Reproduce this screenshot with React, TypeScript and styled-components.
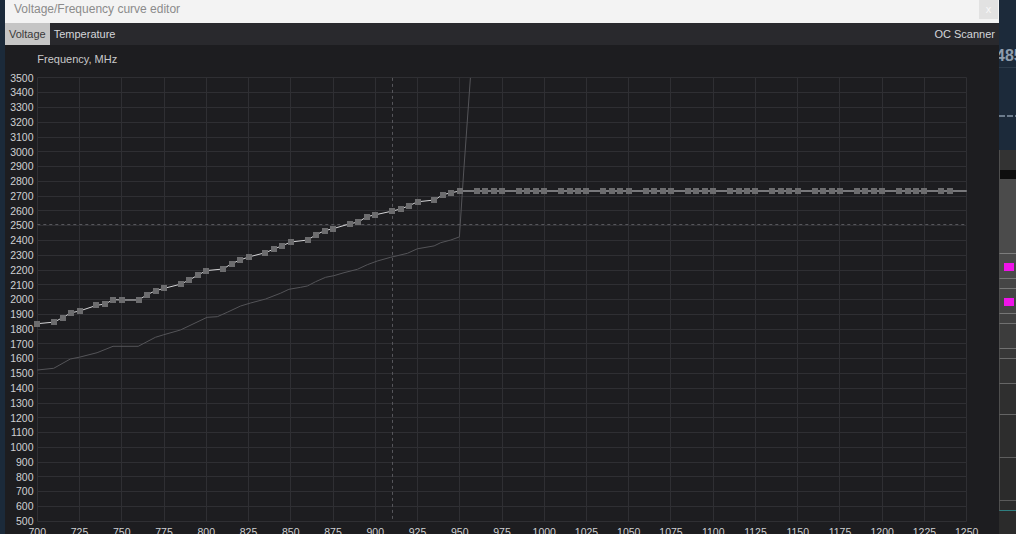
import React from 'react';
import styled, { createGlobalStyle } from 'styled-components';

type CurvePoint = [number, number];

const VOLTAGE_MIN = 700;
const VOLTAGE_MAX = 1250;
const FREQ_MIN = 500;
const FREQ_MAX = 3500;

const CHART_WIDTH = 994;
const CHART_HEIGHT = 489;

const plot = {
    left: 32.3,
    right: 961.7,
    top: 32.9,
    bottom: 476.3,
};

const editedCurve: CurvePoint[] = [
    [700, 1837], [710, 1848], [715, 1878], [720, 1911], [725, 1923],
    [735, 1961], [740, 1970], [745, 1999], [750, 1997],
    [760, 1997], [765, 2033], [770, 2060], [775, 2076],
    [785, 2105], [790, 2133], [795, 2165], [800, 2196],
    [810, 2207], [815, 2243], [820, 2268], [825, 2288],
    [835, 2317], [840, 2342], [845, 2365], [850, 2390],
    [860, 2403], [865, 2439], [870, 2466], [875, 2480],
    [885, 2513], [890, 2525], [895, 2561], [900, 2574],
    [910, 2599], [915, 2613], [920, 2635], [925, 2662],
    [935, 2674], [940, 2710], [945, 2723], [950, 2735],
];

const FLAT_FREQ = 2735;
for (let mv = 955; mv <= 1240; mv += 5) {
    if ((mv - 705) % 25 !== 0) {
        editedCurve.push([mv, FLAT_FREQ]);
    }
}

const defaultCurve: CurvePoint[] = [
    [700, 1524], [709.7, 1535], [719.5, 1598], [724.9, 1610], [735.4, 1641],
    [744.8, 1684], [759.7, 1684], [769.9, 1745], [774.5, 1761], [784.7, 1794],
    [800.5, 1880], [806.5, 1884], [812.4, 1914], [820.3, 1957], [826.2, 1977],
    [835.1, 2004], [844, 2043], [848.9, 2070], [855.8, 2083], [859.8, 2092],
    [864.7, 2121], [870.6, 2151], [875.5, 2162], [881.5, 2182], [889.4, 2205],
    [895.3, 2236], [901.2, 2261], [909.1, 2286], [919, 2313], [924.9, 2344],
    [934.8, 2363], [938.7, 2385], [944.7, 2403], [949.8, 2424], [952.4, 2877],
    [956.3, 3500],
];

const cursor = { mv: 910, freq: 2510 };

const xOf = (mv: number) => plot.left + ((mv - VOLTAGE_MIN) / (VOLTAGE_MAX - VOLTAGE_MIN)) * (plot.right - plot.left);
const yOf = (freq: number) => plot.bottom - ((freq - FREQ_MIN) / (FREQ_MAX - FREQ_MIN)) * (plot.bottom - plot.top);
const crisp = (v: number) => Math.floor(v) + 0.5;
const toPolyline = (points: CurvePoint[]) => points.map(([mv, f]) => `${xOf(mv).toFixed(1)},${yOf(f).toFixed(1)}`).join(' ');

const voltageTicks: number[] = [];
for (let mv = VOLTAGE_MIN; mv <= VOLTAGE_MAX; mv += 25) {
    voltageTicks.push(mv);
}

const freqTicks: number[] = [];
for (let f = FREQ_MIN; f <= FREQ_MAX; f += 100) {
    freqTicks.push(f);
}

const backdropRows = [
    { height: 20, tone: '#333333' },
    { height: 5, tone: '#0e0e0e' },
    { height: 75, tone: '#4b4b4b', rule: '#7d7d7d' },
    { height: 25, tone: '#4a4a4a', rule: '#777777', marker: true },
    { height: 9, tone: '#454545', rule: '#777777' },
    { height: 25, tone: '#444444', rule: '#767676', marker: true },
    { height: 9, tone: '#404040', rule: '#707070' },
    { height: 25, tone: '#3c3c3c', rule: '#707070' },
    { height: 9, tone: '#383838', rule: '#6a6a6a' },
    { height: 25, tone: '#333333', rule: '#666666' },
    { height: 31, tone: '#2f2f2f', rule: '#646464' },
    { height: 43, tone: '#2d2d2d', rule: '#5e5e5e' },
    { height: 43, tone: '#2b2b2b', rule: '#5a5a5a' },
    { height: 3, tone: '#2b2b2b', rule: '#2f7f80' },
];

const GlobalStyle = createGlobalStyle`
    html, body {
        margin: 0;
        padding: 0;
        background: #1b2a3a;
        overflow: hidden;
    }
`;

const Desktop = styled.div`
    display: flex;
    width: 1016px;
    height: 534px;
    overflow: hidden;
    font-family: 'Liberation Sans', Arial, sans-serif;
`;

const BackdropEdge = styled.div`
    flex: none;
    width: 5px;
    background: #1b2a3a;
`;

const EditorWindow = styled.div`
    display: flex;
    flex: none;
    flex-direction: column;
    width: ${CHART_WIDTH}px;
    background: #1d1d20;
`;

const TitleBar = styled.div`
    display: flex;
    flex: none;
    align-items: flex-start;
    height: 23px;
    background: #f3f3f3;
`;

const TitleText = styled.span`
    flex: 1;
    padding: 1px 0 0 9px;
    color: #8b8b8b;
    font-size: 12px;
    line-height: 16px;
`;

const CloseButton = styled.button`
    width: 19px;
    height: 19px;
    margin-right: 1px;
    padding: 0;
    border: 0;
    background: #e2e2e2;
    color: #f8f8f8;
    font: 11px/17px 'Liberation Sans', Arial, sans-serif;
`;

const TabStrip = styled.div`
    display: flex;
    flex: none;
    height: 22px;
    background: #29292d;
`;

const Tab = styled.div<{ $active?: boolean }>`
    padding: 0 4px;
    background: ${props => (props.$active ? '#c5c5c5' : 'transparent')};
    color: ${props => (props.$active ? '#3a3a3a' : '#d4d6da')};
    font-size: 11px;
    line-height: 22px;
    white-space: nowrap;
`;

const TabSpacer = styled.div`
    flex: 1;
`;

const ChartPanel = styled.div`
    flex: 1;
    overflow: hidden;
    background: #1d1d20;
`;

const ChartSvg = styled.svg`
    display: block;
`;

const AxisText = styled.text`
    fill: #cfd0d2;
    font-family: 'Liberation Sans', Arial, sans-serif;
    font-size: 10.5px;
`;

const AxisTitle = styled.text`
    fill: #c9c9cb;
    font-family: 'Liberation Sans', Arial, sans-serif;
    font-size: 11px;
`;

const BackdropPanel = styled.div`
    display: flex;
    flex: 1;
    flex-direction: column;
    overflow: hidden;
    background: #2b2b2b;
`;

const BackdropGauge = styled.div`
    display: flex;
    flex: none;
    flex-direction: column;
    height: 150px;
    background: #1c2a3a;
`;

const GaugeReading = styled.div`
    box-sizing: border-box;
    height: 68px;
    margin-left: -3px;
    padding-top: 46px;
    border-bottom: 1px solid #2d3c4b;
    color: #8e9dac;
    font-size: 16px;
    font-weight: bold;
    line-height: 20px;
    white-space: nowrap;
`;

const GaugeDash = styled.div`
    height: 2px;
    margin-top: 47px;
    background: repeating-linear-gradient(90deg, #6b7b8c 0 6px, transparent 6px 8px);
`;

const BackdropRow = styled.div<{ $height: number; $tone: string; $rule?: string }>`
    box-sizing: border-box;
    flex: none;
    height: ${props => props.$height}px;
    padding: 9px 0 0 4px;
    background: ${props => props.$tone};
    border-left: 1px solid #4e4e4e;
    border-bottom: ${props => (props.$rule ? `1px solid ${props.$rule}` : 'none')};
`;

const MarkerSwatch = styled.div`
    width: 10px;
    height: 8px;
    background: #f014ea;
`;

const CurveChart = () => {
    const squares = editedCurve.map(([mv, f]) => [Math.round(xOf(mv) - 3), Math.round(yOf(f) - 3)]);
    const linePoints = toPolyline([...editedCurve, [VOLTAGE_MAX, FLAT_FREQ]]);

    return (
        <ChartSvg width={CHART_WIDTH} height={CHART_HEIGHT} viewBox={`0 0 ${CHART_WIDTH} ${CHART_HEIGHT}`}>
            <AxisTitle x={plot.left} y={18.3}>Frequency, MHz</AxisTitle>

            <g stroke="#2f2f33" strokeWidth={1}>
                {voltageTicks.map(mv => (
                    <line key={mv} x1={crisp(xOf(mv))} x2={crisp(xOf(mv))} y1={crisp(plot.top)} y2={crisp(plot.bottom)} />
                ))}
                {freqTicks.map(f => (
                    <line key={f} x1={crisp(plot.left)} x2={crisp(plot.right)} y1={crisp(yOf(f))} y2={crisp(yOf(f))} />
                ))}
            </g>

            {freqTicks.map(f => (
                <AxisText key={f} x={28.5} y={yOf(f) + 3.7} textAnchor="end">
                    {f}
                </AxisText>
            ))}
            {voltageTicks.map(mv => (
                <AxisText key={mv} x={xOf(mv)} y={490.5} textAnchor="middle">
                    {mv}
                </AxisText>
            ))}

            <g stroke="#56565b" strokeWidth={1} strokeDasharray="3 3">
                <line x1={crisp(xOf(cursor.mv))} x2={crisp(xOf(cursor.mv))} y1={plot.top} y2={plot.bottom} />
                <line x1={plot.left} x2={plot.right} y1={crisp(yOf(cursor.freq))} y2={crisp(yOf(cursor.freq))} />
            </g>

            <polyline points={toPolyline(defaultCurve)} fill="none" stroke="#545458" strokeWidth={1} />
            <polyline points={linePoints} fill="none" stroke="#d4d4d6" strokeWidth={1} />

            <g fill="#6c6c6e">
                {squares.map(([x, y], i) => (
                    <rect key={i} x={x} y={y} width={6} height={6} />
                ))}
            </g>
        </ChartSvg>
    );
};

const App = () => {
    return (
        <>
            <GlobalStyle />
            <Desktop>
                <BackdropEdge />
                <EditorWindow>
                    <TitleBar>
                        <TitleText>Voltage/Frequency curve editor</TitleText>
                        <CloseButton>x</CloseButton>
                    </TitleBar>
                    <TabStrip>
                        <Tab $active={true}>Voltage</Tab>
                        <Tab>Temperature</Tab>
                        <TabSpacer />
                        <Tab>OC Scanner</Tab>
                    </TabStrip>
                    <ChartPanel>
                        <CurveChart />
                    </ChartPanel>
                </EditorWindow>
                <BackdropPanel>
                    <BackdropGauge>
                        <GaugeReading>485</GaugeReading>
                        <GaugeDash />
                    </BackdropGauge>
                    {backdropRows.map((row, i) => (
                        <BackdropRow key={i} $height={row.height} $tone={row.tone} $rule={row.rule}>
                            {row.marker && <MarkerSwatch />}
                        </BackdropRow>
                    ))}
                </BackdropPanel>
            </Desktop>
        </>
    );
};

export default App;
